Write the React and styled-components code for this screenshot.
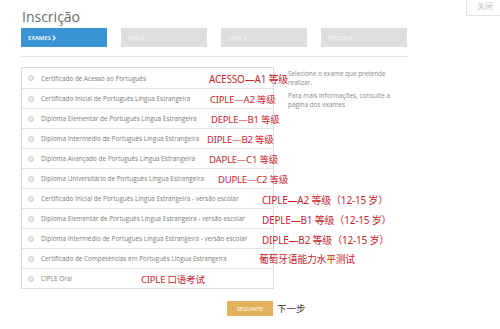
import React from 'react';
import styled, { createGlobalStyle } from 'styled-components';

const Global = createGlobalStyle`
  html, body {
    margin: 0;
    background: #fff;
  }
  body {
    font-family: "Open Sans", "Noto Sans", sans-serif;
  }
`;

const Page = styled.div`
  position: relative;
  width: 500px;
  height: 329px;
  overflow: hidden;
  padding: 7px 0 0 21px;
  box-sizing: border-box;
`;

const CloseBox = styled.div`
  position: absolute;
  top: -2px;
  right: -4px;
  width: 38px;
  height: 18px;
  border: 1px solid #e2e2e2;
  color: #c4c4c4;
  font-family: "Noto Sans CJK SC", sans-serif;
  font-size: 8px;
  line-height: 10px;
  display: flex;
  justify-content: center;
  padding-top: 2px;
  box-sizing: border-box;
`;

const Title = styled.h1`
  margin: 0 0 0 1px;
  font-size: 14px;
  line-height: 20px;
  font-weight: 400;
  color: #656c72;
`;

const Tabs = styled.div`
  display: flex;
  gap: 14px;
  margin-top: 1px;
`;

const Tab = styled.div`
  width: 86px;
  height: 19px;
  background: ${(p) => (p.$active ? '#3a93d4' : '#dedede')};
  color: ${(p) => (p.$active ? '#fff' : '#f3f3f3')};
  font-size: 6px;
  font-weight: 600;
  letter-spacing: -0.1px;
  display: flex;
  align-items: center;
  gap: 1px;
  padding-left: 7px;
  box-sizing: border-box;
`;

const Divider = styled.div`
  width: 387px;
  height: 1px;
  background: #e8e8e8;
  margin-top: 9px;
`;

const Content = styled.div`
  display: flex;
  margin-top: 10px;
`;

const List = styled.div`
  width: 253px;
  border: 1px solid #dcdcdc;
  box-sizing: border-box;
`;

const Row = styled.div`
  position: relative;
  height: 20px;
  display: flex;
  align-items: center;
  padding-left: 6px;
  border-top: ${(p) => (p.$first ? 'none' : '1px solid #e3e3e3')};
  box-sizing: border-box;
  font-size: 6.4px;
  color: #7a7a7a;
  white-space: nowrap;
`;

const Radio = styled.span`
  width: 4px;
  height: 4px;
  border-radius: 50%;
  border: 1px solid #c9c9c9;
  background: #eee;
  margin-right: 7px;
  flex: none;
`;

const Note = styled.span`
  position: absolute;
  left: ${(p) => p.$left}px;
  top: 50%;
  transform: translateY(-50%);
  font-family: "Noto Sans", "Noto Sans CJK SC", sans-serif;
  font-size: ${(p) => p.$size}px;
  color: #c8262c;
  white-space: nowrap;
  letter-spacing: -0.2px;
`;

const Info = styled.div`
  margin-left: 14px;
  width: 112px;
  font-size: 6.4px;
  line-height: 9px;
  color: #8a8a8a;
  p {
    margin: 2px 0 4px;
  }
`;

const Footer = styled.div`
  width: 253px;
  display: flex;
  justify-content: flex-end;
  margin-top: 12px;
  position: relative;
`;

const NextButton = styled.div`
  width: 46px;
  height: 15px;
  background: #e3b25d;
  color: #fff;
  font-size: 5.5px;
  display: flex;
  align-items: center;
  justify-content: center;
  margin-right: 1px;
`;

const NextNote = styled.span`
  position: absolute;
  left: 256px;
  top: 2px;
  font-family: "Noto Sans CJK SC", sans-serif;
  font-size: 9.5px;
  line-height: 11px;
  color: #3a3a3a;
  white-space: nowrap;
`;

const Chevron = () => (
  <svg width="4" height="6" viewBox="0 0 4 6">
    <path d="M0.8 0.6 L3.2 3 L0.8 5.4" fill="none" stroke="currentColor" strokeWidth="1.2" />
  </svg>
);

const tabs = ['EXAMES', 'PAÍS', 'LAPE', 'ÉPOCA'];

const exams = [
  { label: 'Certificado de Acesso ao Português', note: 'ACESSO—A1 等级', left: 187, size: 10 },
  { label: 'Certificado Inicial de Português Língua Estrangeira', note: 'CIPLE—A2 等级', left: 188, size: 9.5 },
  { label: 'Diploma Elementar de Português Língua Estrangeira', note: 'DEPLE—B1 等级', left: 189, size: 9.5 },
  { label: 'Diploma Intermédio de Português Língua Estrangeira', note: 'DIPLE—B2 等级', left: 185, size: 9.5 },
  { label: 'Diploma Avançado de Português Língua Estrangeira', note: 'DAPLE—C1 等级', left: 187, size: 9.5 },
  { label: 'Diploma Universitário de Português Língua Estrangeira', note: 'DUPLE—C2 等级', left: 196, size: 9.5 },
  { label: 'Certificado Inicial de Português Língua Estrangeira - versão escolar', note: 'CIPLE—A2 等级（12-15 岁）', left: 240, size: 10 },
  { label: 'Diploma Elementar de Português Língua Estrangeira - versão escolar', note: 'DEPLE—B1 等级（12-15 岁）', left: 240, size: 10 },
  { label: 'Diploma Intermédio de Português Língua Estrangeira - versão escolar', note: 'DIPLE—B2 等级（12-15 岁）', left: 240, size: 10 },
  { label: 'Certificado de Competências em Português Língua Estrangeira', note: '葡萄牙语能力水平测试', left: 237, size: 9.8 },
  { label: 'CIPLE Oral', note: 'CIPLE 口语考试', left: 119, size: 9.5 },
];

export default function App() {
  return (
    <>
      <Global />
      <Page>
        <CloseBox>关闭</CloseBox>
        <Title>Inscrição</Title>
        <Tabs>
          {tabs.map((t, i) => (
            <Tab key={t} $active={i === 0}>
              {t}
              <Chevron />
            </Tab>
          ))}
        </Tabs>
        <Divider />
        <Content>
          <List>
            {exams.map((e, i) => (
              <Row key={e.label} $first={i === 0}>
                <Radio />
                {e.label}
                <Note $left={e.left} $size={e.size}>{e.note}</Note>
              </Row>
            ))}
          </List>
          <Info>
            <p>Selecione o exame que pretende realizar.</p>
            <p>Para mais informações, consulte a página dos exames</p>
          </Info>
        </Content>
        <Footer>
          <NextButton>SEGUINTE</NextButton>
          <NextNote>下一步</NextNote>
        </Footer>
      </Page>
    </>
  );
}
